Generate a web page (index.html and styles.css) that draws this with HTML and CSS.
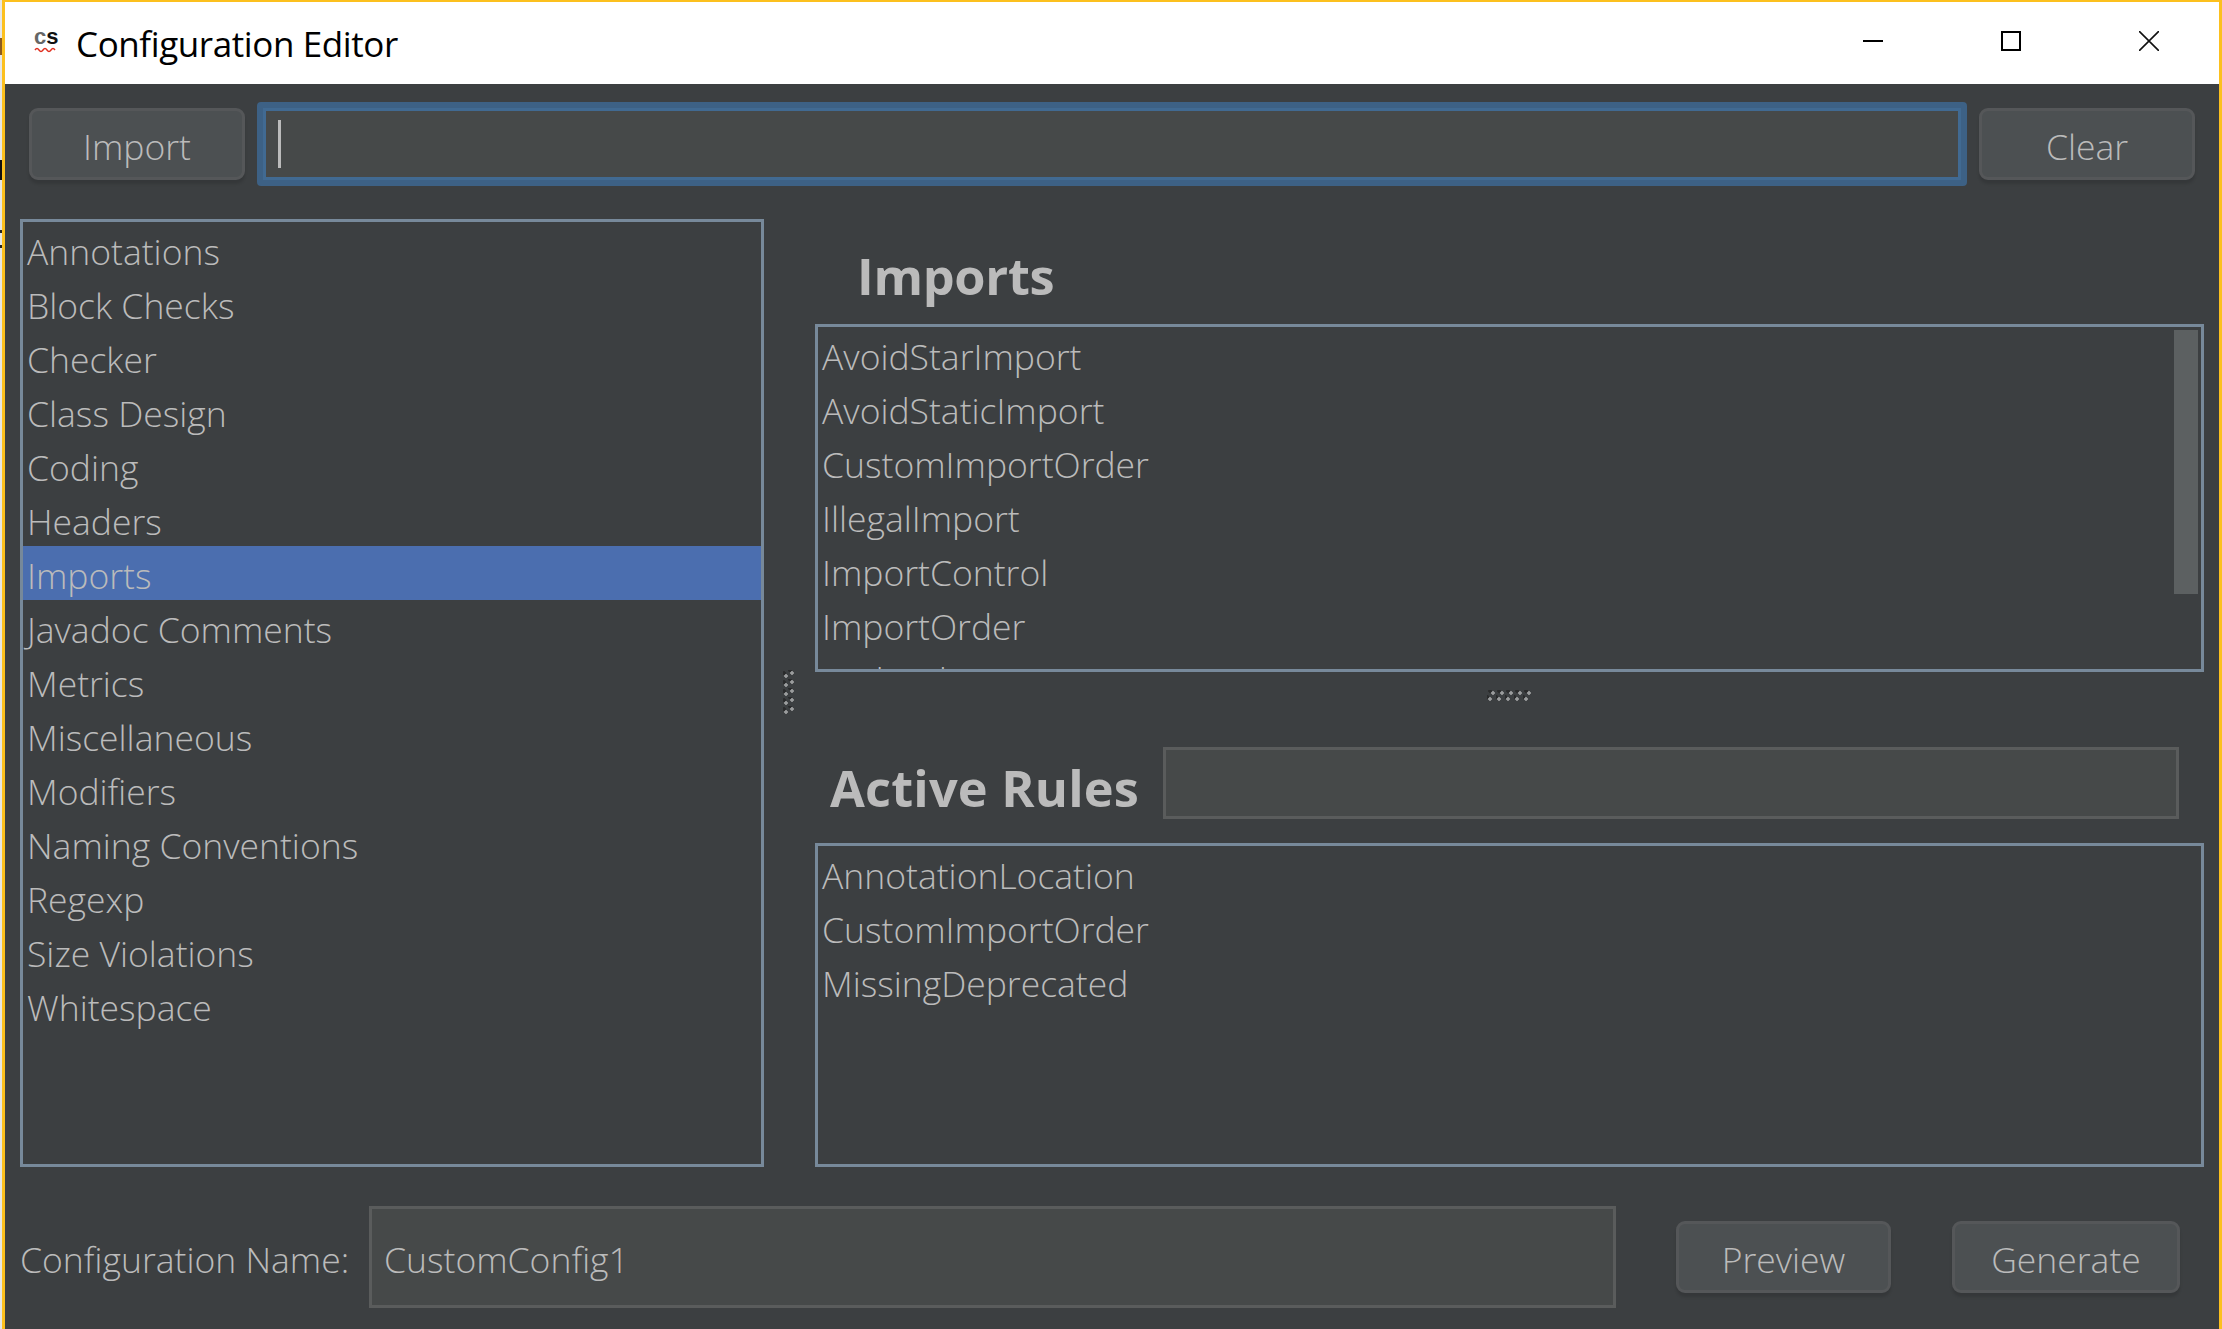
FILE: index.html
```html
<!DOCTYPE html>
<html lang="en">
<head>
    <meta charset="UTF-8">
    <title>Configuration Editor</title>
    <link rel="stylesheet" href="styles.css">
</head>
<body>
    <div class="window">
        <div class="titlebar">
            <svg class="app-icon" width="26" height="40" viewBox="0 0 26 40">
                <text x="0" y="21" class="app-icon-text"><tspan class="icon-c">c</tspan><tspan class="icon-s">s</tspan></text>
                <path d="M1 27 q2 -3 4 0 t4 0 t4 0 t4 0 t4 0" fill="none" stroke="#e03020" stroke-width="1.4"/>
            </svg>
            <span class="title">Configuration Editor</span>
            <div class="win-controls">
                <svg width="20" height="20" viewBox="0 0 20 20"><path d="M0 10H20" stroke="#000" stroke-width="2"/></svg>
                <svg width="20" height="20" viewBox="0 0 20 20"><rect x="1" y="1" width="18" height="18" fill="none" stroke="#000" stroke-width="2"/></svg>
                <svg width="20" height="20" viewBox="0 0 20 20"><path d="M0 0L20 20M20 0L0 20" stroke="#111" stroke-width="1.6"/></svg>
            </div>
        </div>
        <div class="content">
            <div class="search-row">
                <button class="btn btn-top">Import</button>
                <div class="search-field"><span class="caret"></span></div>
                <button class="btn btn-top">Clear</button>
            </div>
            <div class="main">
                <ul class="list categories">
                    <li>Annotations</li>
                    <li>Block Checks</li>
                    <li>Checker</li>
                    <li>Class Design</li>
                    <li>Coding</li>
                    <li>Headers</li>
                    <li class="selected">Imports</li>
                    <li>Javadoc Comments</li>
                    <li>Metrics</li>
                    <li>Miscellaneous</li>
                    <li>Modifiers</li>
                    <li>Naming Conventions</li>
                    <li>Regexp</li>
                    <li>Size Violations</li>
                    <li>Whitespace</li>
                </ul>
                <div class="v-split"><div class="grip-v"></div></div>
                <div class="right">
                    <h2 class="imports-title">Imports</h2>
                    <div class="list-wrap">
                        <ul class="list modules">
                            <li>AvoidStarImport</li>
                            <li>AvoidStaticImport</li>
                            <li>CustomImportOrder</li>
                            <li>IllegalImport</li>
                            <li>ImportControl</li>
                            <li>ImportOrder</li>
                            <li>RedundantImport</li>
                        </ul>
                        <div class="scrollbar"><div class="thumb"></div></div>
                    </div>
                    <div class="h-split"><div class="grip-h"></div></div>
                    <div class="active-head">
                        <h2 class="active-title">Active Rules</h2>
                        <div class="filter-field"></div>
                    </div>
                    <ul class="list active">
                        <li>AnnotationLocation</li>
                        <li>CustomImportOrder</li>
                        <li>MissingDeprecated</li>
                    </ul>
                </div>
            </div>
            <div class="footer">
                <label class="name-label">Configuration Name:</label>
                <div class="name-field">CustomConfig1</div>
                <button class="btn btn-preview">Preview</button>
                <button class="btn btn-generate">Generate</button>
            </div>
        </div>
    </div>
</body>
</html>
```

FILE: styles.css
```css
html, body {
    margin: 0;
    height: 100%;
    overflow: hidden;
}
body {
    /* sliver of the desktop showing left of the window */
    background-color: #e6e6e6;
    background-image: linear-gradient(to bottom,
        #e6e6e6 38px, #8a5a20 38px, #8a5a20 55px,
        #e6e6e6 55px, #e6e6e6 160px, #111 160px, #111 180px,
        #e6e6e6 180px, #e6e6e6 230px, #222 230px, #222 233px,
        #e6e6e6 233px, #e6e6e6 245px, #222 245px, #222 248px,
        #e6e6e6 248px);
    font-family: "Open Sans", "Noto Sans", sans-serif;
    font-weight: 300;
    color: #bbbbbb;
}
ul {
    list-style: none;
    margin: 0;
    padding: 0;
}
.window {
    height: 1329px;
    box-sizing: border-box;
    margin-left: 2px;
    border-top: 2px solid #fcc01e;
    border-left: 3px solid #fcc01e;
    border-right: 3px solid #fcc01e;
    display: flex;
    flex-direction: column;
}
.titlebar {
    height: 82px;
    background-color: white;
    display: flex;
    align-items: center;
    color: #000;
    flex-shrink: 0;
}
.app-icon {
    margin-left: 29px;
    margin-right: 16px;
}
.app-icon-text {
    font-family: "Liberation Sans", sans-serif;
    font-weight: bold;
    font-size: 22px;
}
.icon-c {
    fill: #666;
}
.icon-s {
    fill: #111;
}
.title {
    font-size: 35px;
    font-weight: 400;
    letter-spacing: -0.4px;
}
.win-controls {
    margin-left: auto;
    margin-right: 60px;
    display: flex;
    gap: 118px;
    padding-bottom: 4px;
}
.win-controls svg {
    display: block;
}
.content {
    flex: 1;
    display: flex;
    flex-direction: column;
    background-color: #3c3f41;
}
.btn {
    font-family: inherit;
    font-weight: 300;
    font-size: 35.5px;
    color: #bbbbbb;
    background-color: #4c5052;
    border: 3px solid #555759;
    border-radius: 9px;
    box-shadow: 0 4px 3px rgba(0, 0, 0, 0.12);
    height: 72px;
    padding: 4px 0 0;
    box-sizing: border-box;
}
.btn-top {
    width: 216px;
    flex-shrink: 0;
    padding-top: 3px;
}
.search-row {
    display: flex;
    align-items: center;
    padding: 18px 24px 0 24px;
    gap: 12px;
    height: 84px;
}
.search-field {
    flex: 1;
    height: 84px;
    box-sizing: border-box;
    background-color: #464949;
    border: 6px solid #3d6185;
    border-radius: 4px;
    box-shadow: inset 0 0 0 3px #416a92;
    display: flex;
    align-items: center;
    padding-left: 15px;
}
.caret {
    width: 3px;
    height: 48px;
    background-color: #bbbbbb;
}
.main {
    display: flex;
    margin: 33px 15px 0 15px;
    height: 948px;
}
.list {
    border: 3px solid #77899a;
    box-sizing: border-box;
    font-size: 35.5px;
    overflow: hidden;
}
.list li {
    box-sizing: border-box;
    height: 54px;
    padding: 4px 0 0 4px;
    line-height: 50px;
    white-space: nowrap;
}
.categories {
    width: 744px;
    flex-shrink: 0;
}
.categories .selected {
    background-color: #4b6eaf;
}
.v-split {
    width: 51px;
    flex-shrink: 0;
    padding-top: 451px;
    box-sizing: border-box;
}
.grip-v {
    width: 12px;
    height: 44px;
    margin-left: 19px;
    background-image:
        radial-gradient(circle at 3px 6px, #9a9c9d 1.5px, transparent 2px),
        radial-gradient(circle at 9px 3px, #9a9c9d 1.5px, transparent 2px),
        radial-gradient(circle at 1px 3px, #2a2b2c 1.5px, transparent 2px),
        radial-gradient(circle at 7px 0.5px, #2a2b2c 1.5px, transparent 2px);
    background-size: 12px 9px;
}
.right {
    flex: 1;
    display: flex;
    flex-direction: column;
    min-width: 0;
}
.imports-title, .active-title {
    margin: 0;
    font-size: 50.5px;
    font-weight: 700;
    color: #bbbbbb;
}
.imports-title {
    height: 105px;
    padding: 8px 0 0 42px;
    line-height: 97px;
    box-sizing: border-box;
    letter-spacing: -0.3px;
}
.list-wrap {
    position: relative;
    height: 348px;
}
.modules {
    height: 100%;
}
.scrollbar {
    position: absolute;
    top: 6px;
    right: 6px;
    width: 24px;
    bottom: 6px;
}
.thumb {
    height: 264px;
    background-color: #5c6061;
}
.h-split {
    height: 75px;
    padding-top: 18px;
    box-sizing: border-box;
}
.grip-h {
    width: 44px;
    height: 12px;
    margin-left: 672px;
    background-image:
        radial-gradient(circle at 6px 3px, #9a9c9d 1.5px, transparent 2px),
        radial-gradient(circle at 3px 9px, #9a9c9d 1.5px, transparent 2px),
        radial-gradient(circle at 3px 1px, #2a2b2c 1.5px, transparent 2px),
        radial-gradient(circle at 0.5px 7px, #2a2b2c 1.5px, transparent 2px);
    background-size: 9px 12px;
}
.active-head {
    display: flex;
    align-items: center;
    height: 72px;
    padding-left: 15px;
}
.active-title {
    width: 333px;
    padding-top: 8px;
    flex-shrink: 0;
    white-space: nowrap;
    letter-spacing: 0.2px;
}
.filter-field {
    width: 1016px;
    height: 72px;
    box-sizing: border-box;
    background-color: #464949;
    border: 3px solid #5a5c5c;
}
.active {
    margin-top: 24px;
    flex: 1;
}
.footer {
    display: flex;
    align-items: center;
    margin: 39px 0 0 15px;
    height: 102px;
}
.name-label {
    font-size: 35.5px;
    width: 349px;
    padding-top: 4px;
    flex-shrink: 0;
    white-space: nowrap;
}
.name-field {
    width: 1247px;
    height: 102px;
    box-sizing: border-box;
    background-color: #464949;
    border: 3px solid #5a5c5c;
    font-size: 35.5px;
    line-height: 100px;
    padding-left: 12px;
    flex-shrink: 0;
}
.btn-preview {
    width: 215px;
    margin-left: 60px;
}
.btn-generate {
    width: 228px;
    margin-left: 61px;
}
```
